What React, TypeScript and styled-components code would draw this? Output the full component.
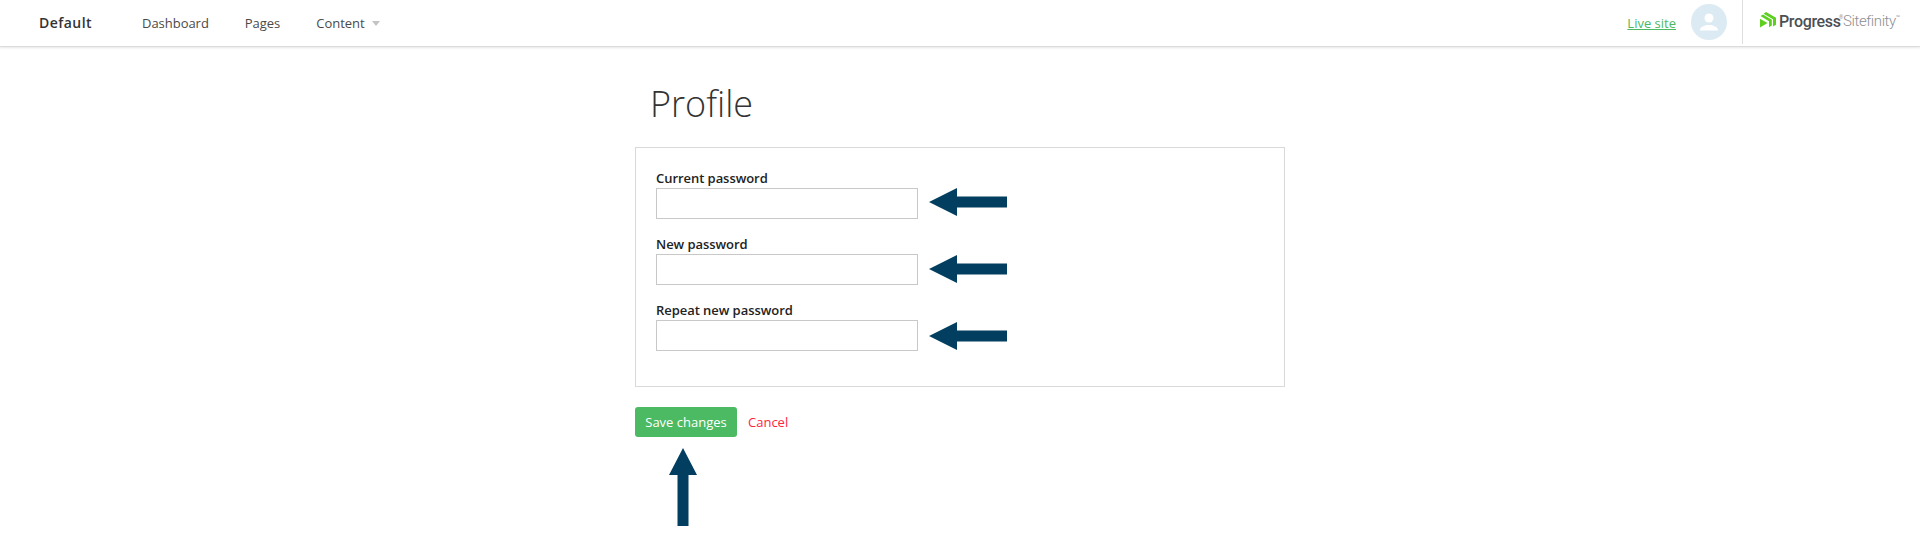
import React from 'react';
import styled, { createGlobalStyle } from 'styled-components';

const GlobalStyle = createGlobalStyle`
  html, body {
    margin: 0;
    padding: 0;
    background: #fff;
    font-family: "Open Sans", "Liberation Sans", sans-serif;
    color: #333;
  }
`;

const Header = styled.header`
  display: flex;
  align-items: stretch;
  height: 46px;
  padding-left: 39px;
  border-bottom: 1px solid #dcdcdc;
  box-shadow: 0 1px 2px rgba(0, 0, 0, 0.1);
`;

const Brand = styled.a`
  align-self: center;
  width: 103px;
  margin-top: -1px;
  font-size: 14px;
  font-weight: 600;
  letter-spacing: 0.45px;
  color: #333;
`;

const Nav = styled.nav`
  display: flex;
  align-items: center;
  flex-grow: 1;
  gap: 36px;
`;

const NavItem = styled.a`
  display: flex;
  align-items: center;
  gap: 7px;
  font-size: 13px;
  letter-spacing: -0.03px;
  color: #4a4a4a;
`;

const Caret = styled.span`
  width: 0;
  height: 0;
  margin-top: 1px;
  border-left: 4.5px solid transparent;
  border-right: 4.5px solid transparent;
  border-top: 5px solid #c4c4c4;
`;

const UserArea = styled.div`
  display: flex;
  align-items: center;
  gap: 15px;
`;

const LiveSite = styled.a`
  font-size: 13px;
  color: #4cb963;
  text-decoration: underline;
`;

const Avatar = styled.span`
  display: flex;
  align-items: center;
  justify-content: center;
  width: 36px;
  height: 36px;
  margin-top: -2px;
  border-radius: 50%;
  background: #dceaf3;
`;

const Divider = styled.span`
  align-self: stretch;
  width: 1px;
  margin-bottom: 2px;
  background: #dedede;
`;

const Logo = styled.div`
  display: flex;
  flex-shrink: 0;
  align-items: center;
  width: 160px;
  margin: -4px 0 0 17px;
  color: #4b4f54;
`;

const LogoIcon = styled.svg`
  display: block;
  margin-top: -2px;
`;

const LogoBold = styled.span`
  width: 60px;
  margin-left: 3px;
  font-family: "Roboto", "Liberation Sans", sans-serif;
  font-size: 16px;
  font-weight: 500;
  letter-spacing: -0.35px;
`;

const LogoLight = styled.span`
  width: 53px;
  font-family: "Roboto", "Liberation Sans", sans-serif;
  font-size: 15px;
  font-weight: 300;
  letter-spacing: -0.4px;
  color: #8b8e92;
`;

const Tiny = styled.span`
  width: 4px;
  font-size: 5px;
  line-height: 0;
  margin-top: -8px;
  color: #8b8e92;
`;

const Main = styled.main`
  width: 650px;
  margin-left: 635px;
`;

const Title = styled.h1`
  margin: 32px 0 0 15px;
  font-size: 36px;
  font-weight: 300;
  line-height: 50px;
  color: #333;
`;

const Panel = styled.section`
  display: flex;
  flex-direction: column;
  gap: 15px;
  height: 240px;
  box-sizing: border-box;
  margin-top: 18px;
  padding: 20px;
  border: 1px solid #d9d9d9;
`;

const Field = styled.div`
  display: flex;
  flex-direction: column;
`;

const Label = styled.label`
  font-size: 13px;
  font-weight: 600;
  letter-spacing: -0.05px;
  line-height: 20px;
  color: #222;
`;

const FieldRow = styled.div`
  display: flex;
  align-items: center;
  gap: 11px;
`;

const Input = styled.input`
  box-sizing: border-box;
  width: 262px;
  height: 31px;
  padding: 0 8px;
  background: #fff;
  border: 1px solid #c8c8c8;
  outline: none;
`;

const Actions = styled.div`
  display: flex;
  align-items: center;
  gap: 11px;
  margin-top: 20px;
`;

const SaveButton = styled.button`
  width: 102px;
  height: 30px;
  padding: 0;
  font-family: inherit;
  font-size: 13px;
  font-weight: 400;
  color: #fff;
  background: #4cb963;
  border: none;
  border-radius: 3px;
`;

const CancelLink = styled.a`
  font-size: 13px;
  color: #ff2442;
`;

const LeftArrow = styled.svg<{ $nudge: number }>`
  display: block;
  margin-top: ${({ $nudge }) => $nudge}px;
`;

const UpArrow = styled.svg`
  display: block;
  margin: 11px 0 0 34px;
`;

const LogoMark = () => (
  <LogoIcon width="16" height="16" viewBox="0 0 16 16" aria-hidden="true">
    <path d="M6 0 16 5.800V12.800L13 14.500V7.300L3.600 1.800z" fill="#5ccf1f" />
    <path d="M.5 4 3 2.600 11.800 7.700V13.500L9 15.200V9.300z" fill="#5ccf1f" />
    <path d="M0 6.800 7.500 11 0 15.500z" fill="#5ccf1f" />
  </LogoIcon>
);

const fields = [
  { name: 'Current password', nudge: -3 },
  { name: 'New password', nudge: -1 },
  { name: 'Repeat new password', nudge: 1 },
];

export default function App() {
  return (
    <>
      <GlobalStyle />
      <Header>
        <Brand>Default</Brand>
        <Nav>
          <NavItem>Dashboard</NavItem>
          <NavItem>Pages</NavItem>
          <NavItem>
            Content
            <Caret />
          </NavItem>
        </Nav>
        <UserArea>
          <LiveSite href="#">Live site</LiveSite>
          <Avatar>
            <svg width="18" height="18" viewBox="0 0 18 18" aria-hidden="true">
              <circle cx="9" cy="5" r="4.500" fill="#fff" />
              <path d="M0 17.500c0-3.500 3-4 6.500-5.500h5c3.500 1.500 6.500 2 6.500 5.500z" fill="#fff" />
            </svg>
          </Avatar>
          <Divider />
        </UserArea>
        <Logo>
          <LogoMark />
          <LogoBold>Progress</LogoBold>
          <Tiny>®</Tiny>
          <LogoLight>Sitefinity</LogoLight>
          <Tiny>™</Tiny>
        </Logo>
      </Header>
      <Main>
        <Title>Profile</Title>
        <Panel>
          {fields.map(({ name, nudge }) => (
            <Field key={name}>
              <Label>{name}</Label>
              <FieldRow>
                <Input type="password" aria-label={name} />
                <LeftArrow $nudge={nudge} width="78" height="28" viewBox="0 0 78 28" aria-hidden="true">
                  <path d="M0 14 28 0v8.500h50v11H28V28z" fill="#023e5f" />
                </LeftArrow>
              </FieldRow>
            </Field>
          ))}
        </Panel>
        <Actions>
          <SaveButton>Save changes</SaveButton>
          <CancelLink>Cancel</CancelLink>
        </Actions>
        <UpArrow width="28" height="78" viewBox="0 0 28 78" aria-hidden="true">
          <path d="M14 0 28 27h-8.500v51h-11V27H0z" fill="#023e5f" />
        </UpArrow>
      </Main>
    </>
  );
}
